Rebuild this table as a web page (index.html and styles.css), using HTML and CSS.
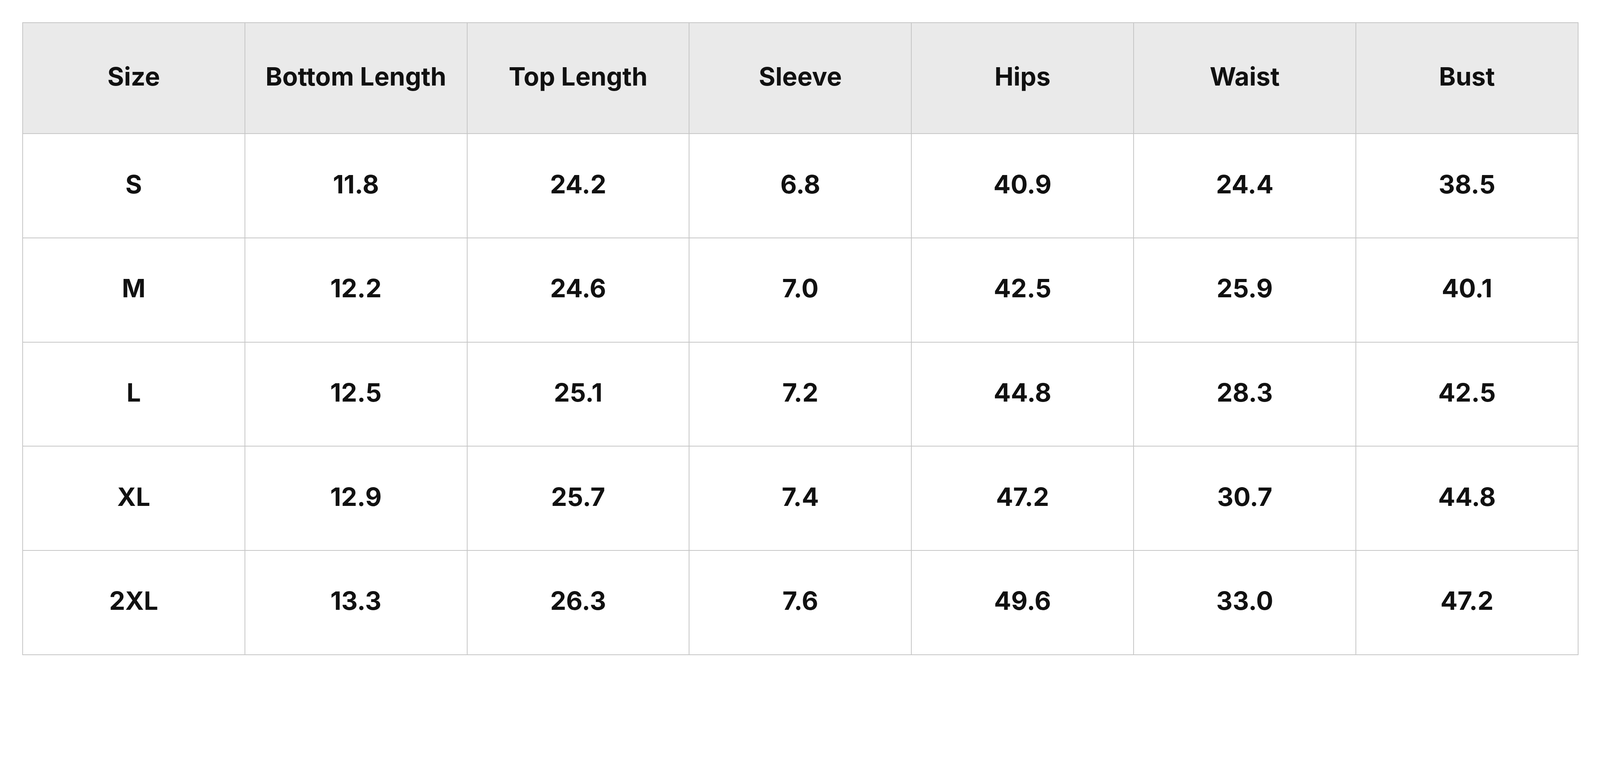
FILE: index.html
```html
<!DOCTYPE html>
<html lang="en">
<head>
<meta charset="utf-8">
<title>Size Chart</title>
<link rel="stylesheet" href="styles.css">
</head>
<body>
<table class="size-table">
  <thead>
    <tr>
      <th>Size</th><th>Bottom Length</th><th>Top Length</th><th>Sleeve</th><th>Hips</th><th>Waist</th><th>Bust</th>
    </tr>
  </thead>
  <tbody>
    <tr><td>S</td><td>11.8</td><td>24.2</td><td>6.8</td><td>40.9</td><td>24.4</td><td>38.5</td></tr>
    <tr><td>M</td><td>12.2</td><td>24.6</td><td>7.0</td><td>42.5</td><td>25.9</td><td>40.1</td></tr>
    <tr><td>L</td><td>12.5</td><td>25.1</td><td>7.2</td><td>44.8</td><td>28.3</td><td>42.5</td></tr>
    <tr><td>XL</td><td>12.9</td><td>25.7</td><td>7.4</td><td>47.2</td><td>30.7</td><td>44.8</td></tr>
    <tr><td>2XL</td><td>13.3</td><td>26.3</td><td>7.6</td><td>49.6</td><td>33.0</td><td>47.2</td></tr>
  </tbody>
</table>
</body>
</html>
```

FILE: styles.css
```css
:root {
  --u: calc(1px / 1.125);
}
html, body {
  margin: 0;
  padding: 0;
  background: #ffffff;
}
body {
  padding: calc(64 * var(--u));
  font-family: Inter, "Noto Sans", sans-serif;
  color: #111111;
}
.size-table {
  border-collapse: collapse;
  table-layout: fixed;
  width: calc(4482 * var(--u));
}
.size-table th,
.size-table td {
  border: 2px solid #c6c6c6;
  text-align: center;
  vertical-align: middle;
  font-size: calc(73 * var(--u));
  font-weight: 700;
  padding: 0 0 calc(10 * var(--u)) 0;
  box-sizing: border-box;
}
.size-table th {
  background: #eaeaea;
  height: calc(320 * var(--u));
}
.size-table td {
  background: #ffffff;
  height: calc(300 * var(--u));
}
```
